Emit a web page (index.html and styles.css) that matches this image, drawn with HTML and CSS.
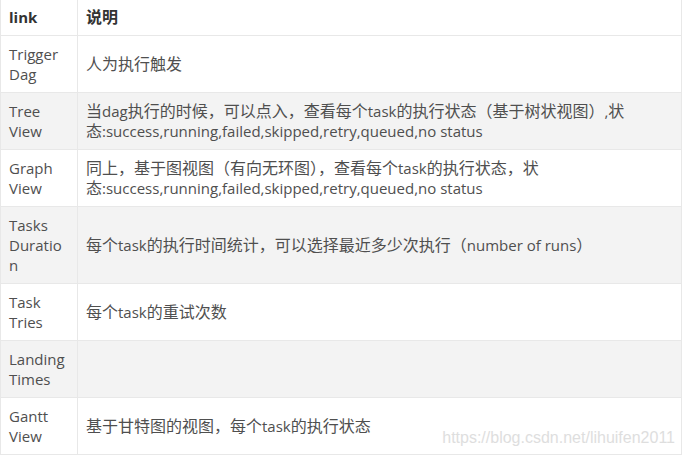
FILE: index.html
```html
<!DOCTYPE html>
<html lang="zh-CN">
<head>
<meta charset="utf-8">
<link rel="stylesheet" href="styles.css">
</head>
<body>
<div class="wrap">
<table class="tbl">
  <thead>
    <tr><th class="c1">link</th><th class="c2">说明</th></tr>
  </thead>
  <tbody>
    <tr><td class="c1">Trigger Dag</td><td class="c2">人为执行触发</td></tr>
    <tr class="alt"><td class="c1">Tree View</td><td class="c2">当<span class="en">dag</span>执行的时候，可以点入，查看每个<span class="en">task</span>的执行状态（基于树状视图）<span class="en">,</span>状态<span class="en">:success,running,failed,skipped,retry,queued,no status</span></td></tr>
    <tr><td class="c1">Graph View</td><td class="c2">同上，基于图视图（有向无环图），查看每个<span class="en">task</span>的执行状态，状态<span class="en">:success,running,failed,skipped,retry,queued,no status</span></td></tr>
    <tr class="alt"><td class="c1">Tasks Duration</td><td class="c2">每个<span class="en">task</span>的执行时间统计，可以选择最近多少次执行（<span class="en">number of runs</span>）</td></tr>
    <tr><td class="c1">Task Tries</td><td class="c2">每个<span class="en">task</span>的重试次数</td></tr>
    <tr class="alt"><td class="c1">Landing Times</td><td class="c2"></td></tr>
    <tr><td class="c1">Gantt View</td><td class="c2">基于甘特图的视图，每个<span class="en">task</span>的执行状态</td></tr>
  </tbody>
</table>
<div class="watermark">https://blog.csdn.net/lihuifen2011</div>
</div>
</body>
</html>
```
FILE: styles.css
```css
html, body {
  margin: 0;
  padding: 0;
  background: #ffffff;
}
.wrap {
  position: relative;
  width: 682px;
  margin-top: -1px;
}
.tbl {
  border-collapse: collapse;
  width: 682px;
  table-layout: fixed;
  font-family: "Open Sans", "Noto Sans CJK SC", sans-serif;
  font-size: 16px;
  line-height: 20px;
  color: #4f4f4f;
}
.tbl th, .tbl td {
  border: 1px solid #e8e8e8;
  padding: 8px;
  text-align: left;
  vertical-align: middle;
  overflow-wrap: anywhere;
  word-break: normal;
}
.tbl th {
  padding-top: 7px;
  font-weight: bold;
  color: #333333;
}
.c1 {
  width: 60px;
  font-size: 15px;
}
.en {
  font-size: 15px;
}
.alt td {
  background: #f3f3f3;
}
.watermark {
  position: absolute;
  right: 7px;
  bottom: 8px;
  font-family: "Liberation Sans", Arial, sans-serif;
  font-size: 16px;
  color: #dedede;
  pointer-events: none;
}
```
